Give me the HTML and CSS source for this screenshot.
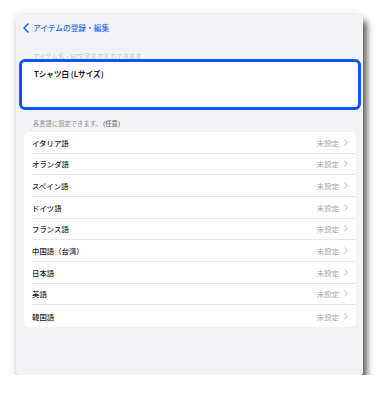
FILE: index.html
```html
<!DOCTYPE html>
<html lang="ja">
<head>
    <meta charset="UTF-8">
    <meta name="viewport" content="width=device-width, initial-scale=1.0">
    <title>アイテムの登録・編集</title>
    <link rel="stylesheet" href="styles.css">
</head>
<body>
    <div class="window">
        <div class="nav">
            <svg class="back" width="6" height="10" viewBox="0 0 6 10">
                <path d="M5 1 L1 5 L5 9" fill="none" stroke="#1f6ff0" stroke-width="1.6" stroke-linecap="round" stroke-linejoin="round"/>
            </svg>
            <span class="nav-title">アイテムの登録・編集</span>
        </div>

        <div class="field-label">アイテム名・60文字まで入力できます</div>
        <div class="name-box">Tシャツ白 (Lサイズ)</div>

        <div class="section-note">各言語に設定できます。 <span class="optional">(任意)</span></div>
        <div class="lang-list">
            <div class="lang-row"><span class="lang">イタリア語</span><span class="state">未設定</span><svg class="chev" width="4" height="7" viewBox="0 0 4 7"><path d="M0.6 0.6 L3.3 3.5 L0.6 6.4" fill="none" stroke="#b4b4b9" stroke-width="0.9"/></svg></div>
            <div class="lang-row"><span class="lang">オランダ語</span><span class="state">未設定</span><svg class="chev" width="4" height="7" viewBox="0 0 4 7"><path d="M0.6 0.6 L3.3 3.5 L0.6 6.4" fill="none" stroke="#b4b4b9" stroke-width="0.9"/></svg></div>
            <div class="lang-row"><span class="lang">スペイン語</span><span class="state">未設定</span><svg class="chev" width="4" height="7" viewBox="0 0 4 7"><path d="M0.6 0.6 L3.3 3.5 L0.6 6.4" fill="none" stroke="#b4b4b9" stroke-width="0.9"/></svg></div>
            <div class="lang-row"><span class="lang">ドイツ語</span><span class="state">未設定</span><svg class="chev" width="4" height="7" viewBox="0 0 4 7"><path d="M0.6 0.6 L3.3 3.5 L0.6 6.4" fill="none" stroke="#b4b4b9" stroke-width="0.9"/></svg></div>
            <div class="lang-row"><span class="lang">フランス語</span><span class="state">未設定</span><svg class="chev" width="4" height="7" viewBox="0 0 4 7"><path d="M0.6 0.6 L3.3 3.5 L0.6 6.4" fill="none" stroke="#b4b4b9" stroke-width="0.9"/></svg></div>
            <div class="lang-row"><span class="lang">中国語（台湾）</span><span class="state">未設定</span><svg class="chev" width="4" height="7" viewBox="0 0 4 7"><path d="M0.6 0.6 L3.3 3.5 L0.6 6.4" fill="none" stroke="#b4b4b9" stroke-width="0.9"/></svg></div>
            <div class="lang-row"><span class="lang">日本語</span><span class="state">未設定</span><svg class="chev" width="4" height="7" viewBox="0 0 4 7"><path d="M0.6 0.6 L3.3 3.5 L0.6 6.4" fill="none" stroke="#b4b4b9" stroke-width="0.9"/></svg></div>
            <div class="lang-row"><span class="lang">英語</span><span class="state">未設定</span><svg class="chev" width="4" height="7" viewBox="0 0 4 7"><path d="M0.6 0.6 L3.3 3.5 L0.6 6.4" fill="none" stroke="#b4b4b9" stroke-width="0.9"/></svg></div>
            <div class="lang-row"><span class="lang">韓国語</span><span class="state">未設定</span><svg class="chev" width="4" height="7" viewBox="0 0 4 7"><path d="M0.6 0.6 L3.3 3.5 L0.6 6.4" fill="none" stroke="#b4b4b9" stroke-width="0.9"/></svg></div>
        </div>
    </div>
</body>
</html>
```

FILE: styles.css
```css
body {
    margin: 0;
    background: #ffffff;
    font-family: "Noto Sans CJK JP", "Noto Sans", sans-serif;
}
.window {
    margin: 15px 0 0 16px;
    width: 347px;
    height: 360px;
    background: #f2f2f7;
    border-radius: 3px;
    box-shadow: 4px 6px 6px rgba(0, 0, 0, 0.6), 0 0 8px rgba(0, 0, 0, 0.14);
    overflow: hidden;
}
.nav {
    height: 26px;
    display: flex;
    align-items: center;
    padding-left: 7px;
}
.back {
    display: block;
    margin-right: 4px;
}
.nav-title {
    color: #1f6ff0;
    font-size: 7.7px;
    font-weight: 500;
    line-height: 10px;
}
.field-label {
    height: 18px;
    overflow: hidden;
    box-sizing: border-box;
    padding: 10.5px 0 0 17px;
    font-size: 6.4px;
    line-height: 10px;
    color: #c6c6cb;
}
.name-box {
    margin: 0 2px 0 3px;
    height: 51px;
    box-sizing: border-box;
    border: 3.8px solid #0a55ff;
    border-radius: 6px;
    background: #ffffff;
    padding: 6px 0 0 12px;
    font-size: 7.6px;
    font-weight: 700;
    line-height: 11px;
    color: #1c1c1e;
}
.section-note {
    height: 22px;
    box-sizing: border-box;
    padding: 9px 0 0 17px;
    font-size: 6.3px;
    line-height: 10px;
    color: #8e8e93;
}
.optional {
    color: #6c6c70;
    font-weight: 500;
}
.lang-list {
    margin: 0 7px 0 8px;
    background: #ffffff;
    border-radius: 5px;
    padding-left: 8px;
}
.lang-row {
    height: 21.67px;
    box-sizing: border-box;
    display: flex;
    align-items: center;
    padding-right: 8px;
    border-bottom: 1px solid #e6e6eb;
}
.lang-row:last-child {
    border-bottom: none;
}
.lang {
    flex: 1;
    font-size: 7.4px;
    font-weight: 500;
    color: #1c1c1e;
}
.state {
    font-size: 7.4px;
    color: #a8a8ad;
    margin-right: 5px;
}
.chev {
    display: block;
}
```
